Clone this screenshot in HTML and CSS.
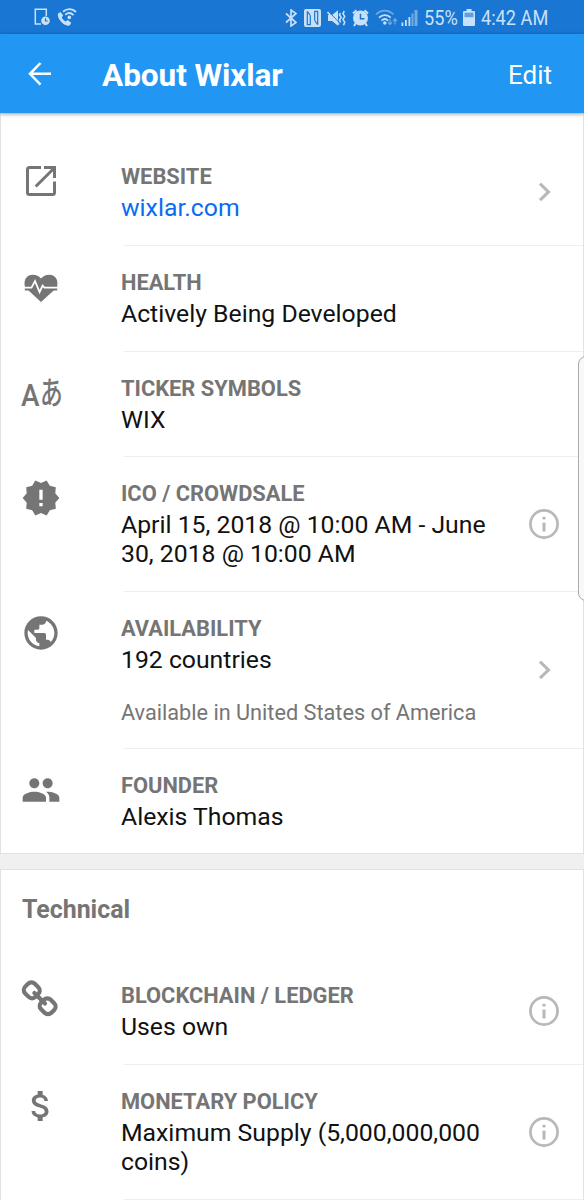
FILE: index.html
```html
<!DOCTYPE html>
<html lang="en">
<head>
<meta charset="utf-8">
<title>About Wixlar</title>
<link rel="stylesheet" href="styles.css">
</head>
<body>
<svg class="defs" width="0" height="0">
  <symbol id="chevron" viewBox="0 0 30 30"><path d="M11 6.700l8.500 8.200-8.500 8.200" fill="none" stroke="currentColor" stroke-width="3"/></symbol>
  <symbol id="info" viewBox="0 0 30 30"><circle cx="15" cy="15" r="13.600" fill="none" stroke="currentColor" stroke-width="2.700"/><path d="M13.500 7.800h3v2.700h-3zM13.500 13.500h3v9h-3z" fill="currentColor"/></symbol>
</svg>
<div class="screen">
  <div class="status">
    <div class="status-left">
      <svg width="17" height="18" viewBox="0 0 17 18"><path d="M7 16H1.300V1.300h11V8" fill="none" stroke="currentColor" stroke-width="1.500"/><circle cx="11.500" cy="12.800" r="4.300" fill="currentColor"/><path d="M11.500 10.300v2.700h2.300" fill="none" stroke="#1976d2" stroke-width="1.200"/></svg>
      <svg width="20" height="19" viewBox="0 0 20 19"><path d="M1.300 5.200L3.500 4l2.700 3.600-1.500 2c.9 1.700 2.200 3 4 3.900l2-1.400 3.500 2.700-1.300 2.400c-1.400 1-4.300.4-7-1.700C2.500 12.800-.3 8 1.300 5.200z" fill="currentColor"/><path d="M6 3.800c4-3.600 9.500-3.600 13 .2M8.300 6.800c2.700-2.300 5.700-2.200 8.200.3" fill="none" stroke="currentColor" stroke-width="1.900"/><circle cx="12.300" cy="9.400" r="1.800" fill="currentColor"/></svg>
    </div>
    <div class="status-right">
      <svg class="bt" width="12" height="18" viewBox="0 0 12 18"><path d="M1 4.500l10 9L6 17V1l5 3.500-10 9" fill="none" stroke="currentColor" stroke-width="1.700"/></svg>
      <svg class="nfc" width="17" height="18" viewBox="0 0 17 18"><rect width="17" height="18" rx="2" fill="currentColor"/><path d="M6.800 15.600H3.300V2.500M10.200 2.400h3.500v13M6.300 15.600V6.500M10.700 2.400v9.100" fill="none" stroke="#1976d2" stroke-width="1.200"/><path d="M3.300 2.400l3 4.100M10.700 11.500l3 4.100" stroke="#1976d2" stroke-width="1.200"/></svg>
      <svg class="mute" width="19" height="18" viewBox="0 0 19 18"><path d="M1 6h4l6-4.700v15.400L5 12H1z" fill="currentColor"/><path d="M1.600 2.500l12 12.500" stroke="#1976d2" stroke-width="1"/><path d="M.5 3l11.500 12.500" stroke="currentColor" stroke-width="1.600"/><path d="M13.500 4l-1 2 1.700 2.500-1.700 2.500 1 2.500M17.200 2l-1.200 2.800 1.700 2.700L16 10.400l1.700 2.800-1.200 3" fill="none" stroke="currentColor" stroke-width="1.600"/></svg>
      <svg class="alarm" width="17" height="18" viewBox="0 0 17 18"><circle cx="8.500" cy="9" r="7.500" fill="currentColor"/><path d="M1 4.500L4.500 1.200M16 4.500l-3.500-3.300M3.800 14L2 17M13.200 14l1.800 3" stroke="currentColor" stroke-width="2"/><path d="M8.500 4.800v5h4" fill="none" stroke="#1976d2" stroke-width="1.500"/></svg>
      <svg class="wifi" width="23" height="17" viewBox="0 0 23 17"><path d="M1 5.500C6 .2 13.500.2 18.500 5.500" fill="none" stroke="currentColor" stroke-width="1.800" opacity=".5"/><path d="M4 8.700c3.500-3.500 8.300-3.500 11.700 0M6.600 11.600c2-1.900 4.500-1.900 6.400 0" fill="none" stroke="currentColor" stroke-width="1.900"/><circle cx="9.800" cy="14" r="1.700" fill="currentColor"/><path d="M15 10v5.500m-2-2.200l2 2.200 2-2.200M20 15.500V10m-2 2.200l2-2.200 2 2.200" fill="none" stroke="currentColor" stroke-width="1.200" opacity=".5"/></svg>
      <svg class="signal" width="17" height="17" viewBox="0 0 17 17"><path d="M.5 13.500h1.800V17H.5zM4 11h1.800v6H4zM7.500 8h1.800v9H7.500z" fill="currentColor"/><path d="M10.500 4.500h2V17h-2zM13.500 1h3v16h-3z" fill="currentColor" opacity=".5"/></svg>
      <span class="pct"><span>55%</span></span>
      <svg class="battery" width="12" height="17" viewBox="0 0 12 17"><path d="M3.500 0h5v2H11q1 0 1 1v13q0 1-1 1H1q-1 0-1-1V3q0-1 1-1h2.500z" fill="currentColor"/><path d="M1.500 3.700h9v4.500h-9z" fill="#1976d2" opacity=".6"/></svg>
      <span class="clock"><span>4:42 AM</span></span>
    </div>
  </div>
  <header class="bar">
    <svg class="back" width="24" height="24" viewBox="0 0 24 24"><path d="M12.500 1L2 11.800l10.500 10.800M2 11.800h21" fill="none" stroke="#fff" stroke-width="2.500"/></svg>
    <h1>About Wixlar</h1>
    <span class="edit">Edit</span>
  </header>
  <main>
    <section class="card first">
      <div class="row">
        <svg class="icon" viewBox="0 0 40 40"><path d="M20 6.500H8.500Q6.500 6.500 6.500 8.500v23q0 2 2 2h23q2 0 2-2V20.500M14.700 25.500L32 8.200" fill="none" stroke="currentColor" stroke-width="3"/><path d="M23 5h12v12h-3V10l-2-2h-7z" fill="currentColor"/></svg>
        <div class="body"><div class="text"><div class="label">WEBSITE</div><div class="value link"><span>wixlar.com</span></div></div><svg class="side"><use href="#chevron"/></svg></div>
      </div>
      <div class="row">
        <svg class="icon" viewBox="0 0 40 40"><path transform="translate(0 .5)" d="M3.800 18.600C2.500 11.500 6.500 7.300 11.500 7.300c4 0 6.500 1.600 8.500 3.700 2-2.100 4.500-3.700 8.500-3.700 5 0 9 4.200 7.700 11.300V23h-3.500L20 34.500 7.500 23H3.800z" fill="currentColor"/><path d="M3 20.600h7.500l3.500-6.500 4.600 11 3-6.500 1.800 2H37" fill="none" stroke="#fff" stroke-width="1.800"/></svg>
        <div class="body"><div class="text"><div class="label">HEALTH</div><div class="value">Actively Being Developed</div></div></div>
      </div>
      <div class="row">
        <div class="icon letters"><span class="latin">A</span><span class="kana">あ</span></div>
        <div class="body"><div class="text"><div class="label">TICKER SYMBOLS</div><div class="value">WIX</div></div></div>
      </div>
      <div class="row">
        <svg class="icon" viewBox="0 0 24 24"><path fill="currentColor" d="M23 12l-2.440-2.780.340-3.680-3.610-.820-1.890-3.180L12 3 8.600 1.540 6.710 4.720l-3.610.810.340 3.680L1 12l2.440 2.780-.340 3.690 3.610.820 1.890 3.180L12 21l3.400 1.460 1.890-3.180 3.610-.820-.340-3.680L23 12zm-10 5h-2v-2h2v2zm0-4h-2V7h2v6z"/></svg>
        <div class="body"><div class="text"><div class="label">ICO / CROWDSALE</div><div class="value">April 15, 2018 @ 10:00 AM - June<br>30, 2018 @ 10:00 AM</div></div><svg class="side"><use href="#info"/></svg></div>
      </div>
      <div class="row">
        <svg class="icon" viewBox="0 0 24 24"><path fill="currentColor" d="M12 2C6.480 2 2 6.480 2 12s4.480 10 10 10 10-4.480 10-10S17.520 2 12 2zm-1 17.930c-3.950-.490-7-3.850-7-7.930 0-.620.080-1.210.210-1.790L9 15v1c0 1.100.9 2 2 2v1.930zm6.900-2.540c-.260-.810-1-1.390-1.900-1.390h-1v-3c0-.550-.450-1-1-1H8v-2h2c.550 0 1-.450 1-1V7h2c1.100 0 2-.9 2-2v-.410c2.930 1.190 5 4.060 5 7.410 0 2.080-.8 3.970-2.100 5.390z"/></svg>
        <div class="body"><div class="text"><div class="label">AVAILABILITY</div><div class="value">192 countries</div><div class="note">Available in United States of America</div></div><svg class="side"><use href="#chevron"/></svg></div>
      </div>
      <div class="row">
        <svg class="icon" viewBox="0 0 24 24"><path fill="currentColor" d="M16 11c1.660 0 2.990-1.340 2.990-3S17.660 5 16 5c-1.660 0-3 1.340-3 3s1.340 3 3 3zm-8 0c1.660 0 2.990-1.340 2.990-3S9.660 5 8 5C6.340 5 5 6.340 5 8s1.340 3 3 3zm0 2c-2.330 0-7 1.170-7 3.500V19h14v-2.500c0-2.330-4.670-3.500-7-3.500zm8 0c-.290 0-.620.020-.970.050 1.160.840 1.970 1.970 1.970 3.450V19h6v-2.500c0-2.330-4.670-3.500-7-3.500z"/></svg>
        <div class="body"><div class="text"><div class="label">FOUNDER</div><div class="value">Alexis Thomas</div></div></div>
      </div>
    </section>
    <section class="card second">
      <h2>Technical</h2>
      <div class="row">
        <svg class="icon" viewBox="0 0 40 40"><g fill="none" stroke="currentColor" stroke-width="4.200" transform="translate(18.700 18.300) rotate(45)"><rect x="-18.500" y="-6.800" width="14.500" height="13.600" rx="4.800"/><rect x="4" y="-6.800" width="14.500" height="13.600" rx="4.800"/><path d="M-7.500 0h15" stroke-linecap="round"/></g></svg>
        <div class="body"><div class="text"><div class="label">BLOCKCHAIN / LEDGER</div><div class="value">Uses own</div></div><svg class="side"><use href="#info"/></svg></div>
      </div>
      <div class="row">
        <svg class="icon" viewBox="0 0 24 24"><path fill="currentColor" d="M11.800 10.900c-2.270-.590-3-1.200-3-2.150 0-1.090 1.010-1.850 2.700-1.850 1.780 0 2.440.850 2.500 2.100h2.210c-.070-1.720-1.120-3.300-3.210-3.810V3h-3v2.160c-1.940.420-3.500 1.680-3.500 3.610 0 2.310 1.910 3.460 4.700 4.130 2.500.6 3 1.480 3 2.410 0 .690-.490 1.790-2.700 1.790-2.060 0-2.870-.920-2.980-2.100h-2.200c.120 2.190 1.760 3.420 3.680 3.830V21h3v-2.150c1.950-.370 3.500-1.500 3.500-3.550 0-2.840-2.430-3.810-4.700-4.400z"/></svg>
        <div class="body"><div class="text"><div class="label">MONETARY POLICY</div><div class="value">Maximum Supply (5,000,000,000<br>coins)</div></div><svg class="side"><use href="#info"/></svg></div>
      </div>
    </section>
  </main>
  <div class="edge"></div>
</div>
</body>
</html>
```
FILE: styles.css
```css
* { box-sizing: border-box; }
body { margin: 0; font-family: Roboto, sans-serif; background: #f0f0f0; }
.defs { display: block; }
.screen { position: relative; width: 584px; height: 1200px; overflow: hidden; background: #f0f0f0; }

.status { height: 34px; background: #1976d2; color: #c9e1f8; display: flex; justify-content: space-between; padding: 0 34px; }
.status svg { display: block; flex: none; }
.status-left { display: flex; gap: 6px; padding-top: 8px; }
.status-right { display: flex; align-items: center; height: 35px; }
.nfc { margin-left: 7px; }
.mute { margin-left: 6px; }
.alarm { margin-left: 6px; }
.wifi { margin-left: 6px; }
.signal { margin-left: 3px; }
.pct, .clock { font-size: 21px; line-height: 34px; white-space: nowrap; }
.pct span, .clock span { display: inline-block; transform: scaleX(.865); transform-origin: 0 50%; }
.pct { width: 34px; margin-left: 6px; }
.battery { margin-left: 5px; }
.clock { width: 69px; margin-left: 6px; }

.bar { position: relative; z-index: 1; height: 79px; background: #2196f3; color: #fff; display: flex; align-items: center; padding: 0 32px 0 28px; box-shadow: 0 1px 4px rgba(0, 0, 0, .4); }
.bar h1 { flex: 1; margin: 4px 0 0 50px; font-size: 31.600px; line-height: 40px; font-weight: 700; letter-spacing: -.1px; }
.edit { font-size: 26px; line-height: 36px; margin-top: 3px; }

.card { background: #fff; border: 1px solid #e2e2e2; }
.first { padding-top: 27px; border-top: 0; }
.second { margin-top: 15px; min-height: 340px; }
.second h2 { margin: 0; padding: 23px 0 32.200px 21px; font-size: 24.900px; line-height: 34px; font-weight: 700; color: #757575; }
.row { display: flex; color: #757575; padding-left: 20.300px; }
.icon { flex: none; width: 40px; height: 40px; margin-top: 20.900px; }
.body { flex: 1; display: flex; align-items: center; justify-content: space-between; margin-left: 62.700px; padding: 24px 24px 22.800px 0; border-bottom: 1px solid #efefef; }
.first .row:last-child .body { border-bottom: 0; padding-bottom: 21.800px; }
.text { margin-left: -3px; white-space: nowrap; }
.label { font-size: 21.850px; line-height: 26px; font-weight: 700; }
.value { margin-top: 3px; font-size: 24.780px; line-height: 29px; color: #111; }
.link { color: #0a6cf0; }
.note { margin-top: 25.500px; margin-bottom: -.200px; font-size: 21.700px; line-height: 26px; }
.side { flex: none; width: 30px; height: 30px; margin-top: -1.800px; color: #b8b8b8; }
.letters { display: flex; align-items: baseline; line-height: 40px; }
.latin { width: 18.500px; font-size: 31px; font-weight: 500; transform: translateY(2.500px) scaleX(.9); transform-origin: 0 50%; }
.kana { font-family: "Noto Sans CJK JP", sans-serif; font-size: 25px; font-weight: 500; transform-origin: 0 60%; transform: translateY(-1px) scale(.91, 1.260); }

.edge { position: absolute; left: 578px; top: 356px; width: 16px; height: 245px; border: 1px solid #aaa; border-radius: 8px; background: #f8f8f8; }
```
